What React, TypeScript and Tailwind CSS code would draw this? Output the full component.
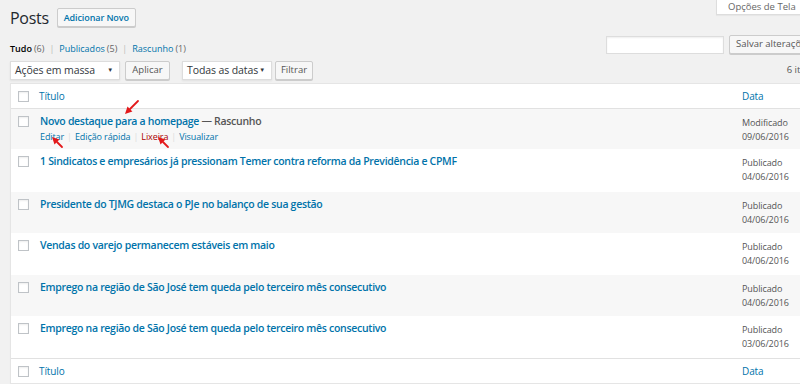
import React from 'react';

const ROWS = [
  { title: 'Novo destaque para a homepage', draft: true, status: 'Modificado', date: '09/06/2016', h: 'h-[40px]', bg: 'bg-[#f7f7f7]' },
  { title: '1 Sindicatos e empresários já pressionam Temer contra reforma da Previdência e CPMF', status: 'Publicado', date: '04/06/2016', h: 'h-[43px]', bg: 'bg-white' },
  { title: 'Presidente do TJMG destaca o PJe no balanço de sua gestão', status: 'Publicado', date: '04/06/2016', h: 'h-[41px]', bg: 'bg-[#f7f7f7]' },
  { title: 'Vendas do varejo permanecem estáveis em maio', status: 'Publicado', date: '04/06/2016', h: 'h-[42px]', bg: 'bg-white' },
  { title: 'Emprego na região de São José tem queda pelo terceiro mês consecutivo', status: 'Publicado', date: '04/06/2016', h: 'h-[41px]', bg: 'bg-[#f7f7f7]' },
  { title: 'Emprego na região de São José tem queda pelo terceiro mês consecutivo', status: 'Publicado', date: '03/06/2016', h: 'h-[42px]', bg: 'bg-white' },
];

function Box() {
  return <span className="block h-[11px] w-[11px] border border-[#bfc3c7] bg-white shadow-[inset_0_1px_2px_rgba(0,0,0,0.07)]" />;
}

function Select({ label, w }: { label: string; w: string }) {
  return (
    <div className={`flex h-[19px] ${w} items-center justify-between whitespace-nowrap border border-[#ddd] bg-white pl-[4px] pr-[6px] text-[10.5px] tracking-[-0.1px] text-[#32373c] shadow-[0_1px_2px_rgba(0,0,0,0.07)]`}>
      <span>{label}</span>
      <span className="text-[6px]">▼</span>
    </div>
  );
}

function Btn({ label, w }: { label: string; w: string }) {
  return (
    <div className={`flex h-[19px] ${w} items-center justify-center whitespace-nowrap rounded-[2px] border border-[#ccc] bg-[#f7f7f7] text-[9.5px] text-[#555] shadow-[0_1px_0_#ccc]`}>
      {label}
    </div>
  );
}

function HeadRow({ top }: { top?: boolean }) {
  return (
    <div className={`grid h-[24px] grid-cols-[29px_702px_1fr] items-center bg-white ${top ? 'border-b' : 'border-t'} box-content border-[#e1e1e1]`}>
      <div className="pl-[7px]"><Box /></div>
      <div className="-ml-[1px] text-[10px] tracking-[-0.1px] text-[#0073aa]">Título</div>
      <div className="text-[10px] tracking-[-0.1px] text-[#0073aa]">Data</div>
    </div>
  );
}

export default function App() {
  return (
    <div className="relative h-[384px] w-[800px] overflow-hidden bg-[#f1f1f1] font-['Open_Sans',sans-serif] text-[#444]">
      <div className="absolute right-[-18px] top-0 flex h-[15px] w-[102px] items-center border border-t-0 border-[#ddd] bg-white pl-[11px] text-[9.5px] text-[#666] shadow-[0_1px_1px_rgba(0,0,0,0.04)]">
        Opções de Tela <span className="ml-[4px] text-[6px]">▼</span>
      </div>

      <div className="ml-[10px] w-[820px]">
        <div className="flex h-[34px] items-center gap-[8px] pt-[1px]">
          <h1 className="text-[16px] font-normal leading-none tracking-[-0.3px] text-[#23282d]">Posts</h1>
          <div className="flex h-[19px] items-center rounded-[2px] border border-[#ccc] bg-[#f7f7f7] px-[6px] text-[9px] font-semibold tracking-[-0.1px] text-[#0073aa] shadow-[0_1px_0_#ccc]">
            Adicionar Novo
          </div>
        </div>

        <div className="flex h-[22px] items-start justify-between">
          <div className="mt-[9px] flex items-center text-[9px] leading-[12px] text-[#666]">
            <span className="font-semibold text-black">Tudo</span>
            <span className="ml-[2px]">(6)</span>
            <span className="mx-[5px] text-[#bbb]">|</span>
            <span className="text-[#0073aa]">Publicados</span>
            <span className="ml-[2px]">(5)</span>
            <span className="mx-[5px] text-[#bbb]">|</span>
            <span className="text-[#0073aa]">Rascunho</span>
            <span className="ml-[2px]">(1)</span>
          </div>
          <div className="mr-[12px] mt-[1px] flex items-center gap-[5px]">
            <div className="h-[18px] w-[118px] border border-[#ddd] bg-white shadow-[inset_0_1px_2px_rgba(0,0,0,0.07)]" />
            <Btn label="Salvar alterações" w="w-[89px]" />
          </div>
        </div>

        <div className="mt-[5px] flex h-[19px] items-center">
          <Select label="Ações em massa" w="w-[110px]" />
          <div className="ml-[5px]"><Btn label="Aplicar" w="w-[45px]" /></div>
          <div className="ml-[12px]"><Select label="Todas as datas" w="w-[90px]" /></div>
          <div className="ml-[3px]"><Btn label="Filtrar" w="w-[38px]" /></div>
          <div className="ml-auto mr-[14px] text-[9.5px] text-[#555]">6 itens</div>
        </div>

        <div className="mt-[3px] border border-[#e5e5e5] bg-white shadow-[0_1px_1px_rgba(0,0,0,0.04)]">
          <HeadRow top />
          {ROWS.map((r, i) => (
            <div key={i} className={`grid ${r.h} grid-cols-[29px_702px_1fr] ${r.bg}`}>
              <div className="pl-[7px] pt-[7px]"><Box /></div>
              <div className="pt-[4px]">
                <div className="whitespace-nowrap text-[10.5px] font-semibold leading-[16px] tracking-[-0.3px] text-[#0073aa]">
                  {r.title}
                  {r.draft && <span className="text-[#555]"> — Rascunho</span>}
                </div>
                {r.draft && (
                  <div className="mt-[1px] flex items-center text-[9px] leading-[14px] tracking-[-0.1px] text-[#0073aa]">
                    <span>Editar</span>
                    <span className="mx-[3px] text-[#ddd]">|</span>
                    <span>Edição rápida</span>
                    <span className="mx-[3px] text-[#ddd]">|</span>
                    <span className="text-[#a00]">Lixeira</span>
                    <span className="mx-[3px] text-[#ddd]">|</span>
                    <span>Visualizar</span>
                  </div>
                )}
              </div>
              <div className="pt-[7px] text-[9px] leading-[14px] tracking-[-0.1px] text-[#555]">
                <div>{r.status}</div>
                <div>{r.date}</div>
              </div>
            </div>
          ))}
          <HeadRow />
        </div>
      </div>

      <svg className="pointer-events-none absolute left-0 top-0" width="800" height="384">
        <g stroke="#e3191b" strokeWidth="1.8" fill="#e3191b" strokeLinecap="round">
          <line x1="138" y1="101" x2="130" y2="109" />
          <polygon points="125,114 132.4,111.5 127.5,106.6" stroke="none" />
          <line x1="62" y1="147" x2="57" y2="142" />
          <polygon points="52,137 59.4,139.5 54.5,144.4" stroke="none" />
          <line x1="168" y1="147" x2="163" y2="142" />
          <polygon points="158,137 165.4,139.5 160.5,144.4" stroke="none" />
        </g>
      </svg>
    </div>
  );
}
